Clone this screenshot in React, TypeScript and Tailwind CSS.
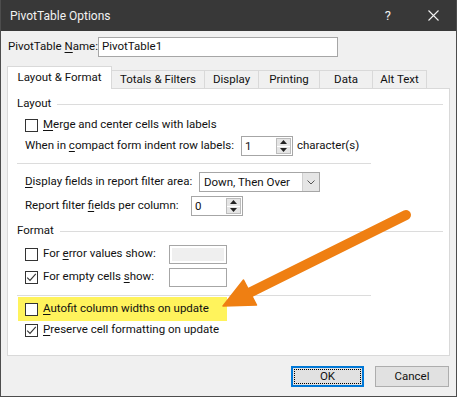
import React from 'react'

const font = "font-['Roboto',sans-serif]"

function Check({ checked }: { checked?: boolean }) {
  return (
    <span className="flex h-[13px] w-[13px] shrink-0 items-center justify-center border border-[#333333] bg-white">
      {checked && (
        <svg width="11" height="11" viewBox="0 0 11 11">
          <path d="M1.2 5.6 L4 8.4 L9.8 1.8" fill="none" stroke="#333333" strokeWidth="1.1" />
        </svg>
      )}
    </span>
  )
}

function Spin({ value }: { value: string }) {
  return (
    <div className="flex h-[20px] w-[52px] shrink-0 items-stretch border border-[#a6a6a6] bg-white">
      <span className="flex-1 pl-[3px] leading-[18px]">{value}</span>
      <div className="my-[1px] mr-[1px] flex w-[15px] flex-col gap-[1px] border border-[#bcbcbc] bg-white">
        <span className="flex flex-1 items-center justify-center bg-[#e5e5e5]">
          <svg width="7" height="4" viewBox="0 0 7 4"><path d="M0 4 L3.5 0 L7 4 Z" fill="#222" /></svg>
        </span>
        <span className="flex flex-1 items-center justify-center bg-[#e5e5e5]">
          <svg width="7" height="4" viewBox="0 0 7 4"><path d="M0 0 L7 0 L3.5 4 Z" fill="#222" /></svg>
        </span>
      </div>
    </div>
  )
}

function SectionHeader({ title }: { title: string }) {
  return (
    <div className="flex h-[16px] items-center gap-[6px] pl-[9px] pr-[6px]">
      <span className="whitespace-nowrap">{title}</span>
      <span className="h-px flex-1 bg-[#dcdcdc]" />
    </div>
  )
}

const tabs = [
  { label: 'Totals & Filters', w: 'w-[93px]' },
  { label: 'Display', w: 'w-[54px]' },
  { label: 'Printing', w: 'w-[61px]' },
  { label: 'Data', w: 'w-[53px]' },
  { label: 'Alt Text', w: 'w-[54px]' },
]

export default function App() {
  return (
    <div className={`relative flex h-[397px] w-[457px] flex-col overflow-hidden whitespace-nowrap border-x border-b border-[#4d4d4d] bg-[#f0f0f0] text-[11.5px] text-[#111] ${font}`}>
      {/* Title bar */}
      <div className="flex h-[31px] shrink-0 items-center bg-[#383838] pl-[9px] text-[#f2f2f2]">
        <span className="flex-1 text-[12px]">PivotTable Options</span>
        <span className="mr-[37px] text-[13px]">?</span>
        <svg className="mr-[17px]" width="11" height="11" viewBox="0 0 11 11">
          <path d="M0.5 0.5 L10.5 10.5 M10.5 0.5 L0.5 10.5" stroke="#f2f2f2" strokeWidth="1.1" />
        </svg>
      </div>

      {/* Name row */}
      <div className="mt-[6px] flex h-[20px] items-center pl-[7px]">
        <span className="w-[90px] shrink-0">
          PivotTable <u className="underline-offset-2">N</u>ame:
        </span>
        <div className="flex h-[20px] w-[240px] items-center border border-[#a6a6a6] bg-white pl-[3px]">
          PivotTable1
        </div>
      </div>

      {/* Tabs */}
      <div className="mt-[9px] flex h-[22px] items-end pl-[6px]">
        <div className="relative z-10 -mb-px flex h-[23px] w-[105px] items-center justify-center border-x border-t border-[#d9d9d9] bg-white">
          Layout &amp; Format
        </div>
        {tabs.map((t) => (
          <div
            key={t.label}
            className={`flex h-[18px] items-center justify-center border-r border-t border-[#d9d9d9] bg-[#f0f0f0] ${t.w}`}
          >
            {t.label}
          </div>
        ))}
      </div>

      {/* Panel */}
      <div className="mx-[6px] flex h-[268px] flex-col border border-[#d9d9d9] bg-white">
        <div className="mt-[7px]">
          <SectionHeader title="Layout" />
        </div>
        <div className="mt-[3px] flex h-[20px] items-center gap-[5px] pl-[17px]">
          <Check />
          <span>
            <u className="underline-offset-2">M</u>erge and center cells with labels
          </span>
        </div>
        <div className="mt-[1px] flex h-[20px] items-center pl-[17px]">
          <span className="w-[216px] shrink-0">
            When in <u className="underline-offset-2">c</u>ompact form indent row labels:
          </span>
          <Spin value="1" />
          <span className="ml-[4px]">character(s)</span>
        </div>
        <div className="ml-[9px] mt-[7px] h-px w-[354px] bg-[#dcdcdc]" />
        <div className="mt-[8px] flex h-[20px] items-center pl-[17px]">
          <span className="w-[174px] shrink-0">
            <u className="underline-offset-2">D</u>isplay fields in report filter area:
          </span>
          <div className="flex h-[20px] w-[121px] shrink-0 items-stretch border border-[#a6a6a6] bg-white">
            <span className="flex-1 pl-[4px] leading-[18px]">Down, Then Over</span>
            <span className="flex w-[17px] items-center justify-center border-l border-[#cfcfcf] bg-[#e5e5e5]">
              <svg width="8" height="5" viewBox="0 0 8 5">
                <path d="M0.5 0.5 L4 4 L7.5 0.5" fill="none" stroke="#555" strokeWidth="1" />
              </svg>
            </span>
          </div>
        </div>
        <div className="mt-[4px] flex h-[20px] items-center pl-[17px]">
          <span className="w-[166px] shrink-0">
            Report filter <u className="underline-offset-2">f</u>ields per column:
          </span>
          <Spin value="0" />
        </div>
        <div className="mt-[7px]">
          <SectionHeader title="Format" />
        </div>
        <div className="mt-[5px] flex h-[20px] items-center pl-[17px]">
          <Check />
          <span className="ml-[5px] w-[126px] shrink-0">
            For <u className="underline-offset-2">e</u>rror values show:
          </span>
          <div className="flex h-[19px] w-[58px] items-center border border-[#a6a6a6] bg-white p-[2px]">
            <div className="h-full w-full bg-[#efefef]" />
          </div>
        </div>
        <div className="mt-[3px] flex h-[20px] items-center pl-[17px]">
          <Check checked />
          <span className="ml-[5px] w-[126px] shrink-0">
            For empty cells <u className="underline-offset-2">s</u>how:
          </span>
          <div className="h-[19px] w-[58px] border border-[#a6a6a6] bg-white" />
        </div>
        <div className="ml-[9px] mt-[8px] h-px w-[354px] bg-[#dcdcdc]" />
        <div className="ml-[10px] mt-[1px] flex h-[24px] w-[209px] items-center gap-[5px] bg-[#fff35c] pl-[7px]">
          <Check />
          <span>
            <u className="underline-offset-2">A</u>utofit column widths on update
          </span>
        </div>
        <div className="flex h-[18px] items-center gap-[5px] pl-[17px]">
          <Check checked />
          <span>
            <u className="underline-offset-2">P</u>reserve cell formatting on update
          </span>
        </div>
      </div>

      {/* Buttons */}
      <div className="mt-[10px] flex justify-end gap-[11px] pr-[7px]">
        <button className="flex h-[21px] w-[73px] items-center justify-center border-2 border-[#0078d7] bg-[#e1e1e1] p-[1px]">
          <span className="flex h-full w-full items-center justify-center border border-dotted border-black">OK</span>
        </button>
        <button className="flex h-[21px] w-[74px] items-center justify-center border border-[#adadad] bg-[#e1e1e1]">
          Cancel
        </button>
      </div>

      {/* Annotation arrow */}
      <svg className="pointer-events-none absolute left-0 top-0" width="457" height="397" viewBox="0 0 457 397">
        <line x1="405" y1="215" x2="246" y2="294" stroke="#ef7f12" strokeWidth="10" strokeLinecap="round" />
        <path d="M222 306 L242.5 280 L255.5 305 Z" fill="#ef7f12" stroke="#ef7f12" strokeWidth="1.5" strokeLinejoin="round" />
      </svg>
    </div>
  )
}
